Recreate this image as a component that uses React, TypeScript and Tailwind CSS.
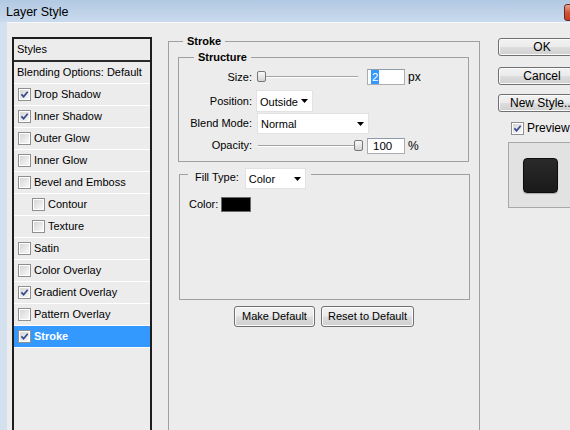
import React from "react";

function Check({ checked }: { checked?: boolean }) {
  return (
    <span className="w-[13px] h-[13px] shrink-0 border border-[#8e8f8f] bg-white p-[1px] flex">
      <span className="flex-1 bg-linear-to-br from-[#d6d6d6] to-[#f8f8f8] flex items-center justify-center">
        {checked && (
          <svg width="9" height="9" viewBox="0 0 9 9">
            <path d="M1.4 4.4 L3.6 6.7 L7.7 1.8" fill="none" stroke="#33498a" strokeWidth="1.7" />
          </svg>
        )}
      </span>
    </span>
  );
}

function Arrow() {
  return (
    <svg width="7" height="4" viewBox="0 0 7 4" className="shrink-0">
      <path d="M0 0 H7 L3.5 4 Z" fill="#000" />
    </svg>
  );
}

function Dropdown({ label, w, h }: { label: string; w: string; h: string }) {
  return (
    <div className={`${w} ${h} bg-white border border-[#e2e2e2] flex items-center justify-between pl-[3px] pr-[4px]`}>
      <span className="text-[11px] leading-[14px] mt-[1px]">{label}</span>
      <Arrow />
    </div>
  );
}

function Slider({ thumb }: { thumb: "start" | "end" }) {
  return (
    <div className="relative w-[106px] h-[12px]">
      <div className="absolute left-[1px] right-[5px] top-[5px] h-[2px] border-t border-[#a3a3a3] border-b border-b-white" />
      <div
        className={`absolute top-[0px] w-[9px] h-[11px] rounded-[2px] border border-[#777] bg-linear-to-b from-[#fafafa] to-[#d4d4d4] ${
          thumb === "start" ? "left-0" : "left-[97px]"
        }`}
      />
    </div>
  );
}

function NumInput({ children }: { children: React.ReactNode }) {
  return (
    <div className="w-[38px] h-[16px] bg-white border border-[#abadb3] border-t-[#8e9aa8] flex items-center pl-[3px] text-[11.5px] leading-[14px]">
      {children}
    </div>
  );
}

const winBtn =
  "h-[21px] rounded-[3px] border border-[#707070] bg-[linear-gradient(#f2f2f2_0%,#ebebeb_48%,#dddddd_52%,#cfcfcf_100%)] shadow-[inset_0_0_0_1px_#fbfbfb] text-[11px] flex items-center justify-center";

const rightBtn =
  "w-[88px] h-[18px] rounded-[3px] border border-[#707070] bg-[linear-gradient(#f2f2f2_0%,#ebebeb_48%,#dddddd_52%,#cfcfcf_100%)] shadow-[inset_0_0_0_1px_#fbfbfb] text-[12px] flex items-center justify-center";

type Row = { label: string; checked?: boolean; indent?: boolean; selected?: boolean };

const rows: Row[] = [
  { label: "Drop Shadow", checked: true },
  { label: "Inner Shadow", checked: true },
  { label: "Outer Glow" },
  { label: "Inner Glow" },
  { label: "Bevel and Emboss" },
  { label: "Contour", indent: true },
  { label: "Texture", indent: true },
  { label: "Satin" },
  { label: "Color Overlay" },
  { label: "Gradient Overlay", checked: true },
  { label: "Pattern Overlay" },
  { label: "Stroke", checked: true, selected: true },
];

export default function App() {
  return (
    <div className="w-[570px] h-[430px] overflow-hidden bg-[#d3e0ee] flex flex-col font-['Liberation_Sans',Arial,sans-serif] text-[11px] text-black">
      {/* Title bar */}
      <div className="h-[22px] shrink-0 bg-linear-to-b from-[#b2c9e3] to-[#c9daed] flex items-center justify-between pl-[6px]">
        <span className="text-[12.5px] leading-[14px] mt-[2px]">Layer Style</span>
        <div className="w-[40px] h-[17px] mt-[2px] mr-[-34px] rounded-[3px] border border-[#6b2a20] bg-linear-to-b from-[#e8a493] via-[#d0543a] to-[#c43c22]" />
      </div>

      {/* Body */}
      <div className="flex-1 ml-[7px] bg-[#ececec] border-t border-[#f4f7fb] flex pl-[5px]">
        {/* Styles list */}
        <div className="w-[140px] h-[420px] mt-[14px] shrink-0 border-2 border-[#1e1e1e] flex flex-col">
          <div className="h-[21px] flex items-center pl-[3px] text-[11px]">Styles</div>
          <div className="h-[2px] bg-[#2a2a2a]" />
          <div className="h-[22px] flex items-center pl-[3px] border-b border-white">Blending Options: Default</div>
          {rows.map((r) => (
            <div
              key={r.label}
              className={`h-[22px] flex items-center border-b border-white ${r.indent ? "pl-[18px]" : "pl-[4px]"} ${
                r.selected ? "bg-[#3399ff] text-white font-bold" : ""
              }`}
            >
              <Check checked={r.checked} />
              <span className="ml-[3px]">{r.label}</span>
            </div>
          ))}
        </div>

        {/* Middle */}
        <fieldset className="w-[312px] h-[420px] mt-[12px] ml-[16px] shrink-0 border border-[#a0a0a0] flex flex-col">
          <legend className="ml-[14px] px-[4px] font-bold leading-[13px]">Stroke</legend>

          <fieldset className="mt-[3px] ml-[9px] mr-[10px] border border-[#a0a0a0] pb-[5px]">
            <legend className="ml-[15px] px-[4px] font-bold leading-[13px]">Structure</legend>
            <div className="h-[26px] flex items-center">
              <span className="w-[73px] text-right">Size:</span>
              <div className="ml-[5px]">
                <Slider thumb="start" />
              </div>
              <div className="ml-[4px]">
                <NumInput>
                  <span className="bg-[#3399ff] text-white px-[1px]">2</span>
                </NumInput>
              </div>
              <span className="ml-[3px] text-[12px]">px</span>
            </div>
            <div className="h-[22px] flex items-center">
              <span className="w-[73px] text-right">Position:</span>
              <div className="ml-[4px]">
                <Dropdown label="Outside" w="w-[57px]" h="h-[22px]" />
              </div>
            </div>
            <div className="h-[23px] flex items-center">
              <span className="w-[73px] text-right">Blend Mode:</span>
              <div className="ml-[5px]">
                <Dropdown label="Normal" w="w-[112px]" h="h-[21px]" />
              </div>
            </div>
            <div className="h-[21px] flex items-center">
              <span className="w-[73px] text-right">Opacity:</span>
              <div className="ml-[5px]">
                <Slider thumb="end" />
              </div>
              <div className="ml-[4px]">
                <NumInput>
                  <span className="pl-[2px]">100</span>
                </NumInput>
              </div>
              <span className="ml-[3px] text-[12px]">%</span>
            </div>
          </fieldset>

          <fieldset className="mt-[4px] ml-[10px] mr-[9px] h-[134px] border border-[#a0a0a0]">
            <legend className="ml-[8px] pl-[7px] pr-[5px] h-[16px] flex items-start">
              <span className="mt-[5px] leading-[13px]">Fill Type:</span>
              <div className="ml-[6px] mt-[2px]">
                <Dropdown label="Color" w="w-[61px]" h="h-[21px]" />
              </div>
            </legend>
            <div className="mt-[14px] pl-[9px] flex items-center">
              <span>Color:</span>
              <div className="ml-[3px] w-[30px] h-[15px] bg-black border border-[#6a6a6a]" />
            </div>
          </fieldset>

          <div className="mt-[6px] flex justify-center gap-[6px]">
            <div className={`${winBtn} w-[81px]`}>Make Default</div>
            <div className={`${winBtn} w-[93px]`}>Reset to Default</div>
          </div>
        </fieldset>

        {/* Right */}
        <div className="ml-[18px] mt-[15px] flex flex-col shrink-0">
          <div className={`${rightBtn} border-[#3c7fb1] bg-[linear-gradient(#eaf6fd_0%,#d9f0fc_48%,#bee6fd_52%,#a7d9f5_100%)]`}>OK</div>
          <div className={`${rightBtn} mt-[11px]`}>Cancel</div>
          <div className={`${rightBtn} mt-[9px]`}>New Style...</div>
          <div className="mt-[8px] ml-[13px] h-[16px] flex items-center">
            <Check checked />
            <span className="ml-[3px] text-[12px]">Preview</span>
          </div>
          <div className="mt-[6px] ml-[10px] w-[70px] h-[66px] bg-[#e2e2e2] border border-[#a8a8a8] pl-[14px] pt-[15px]">
            <div className="w-[35px] h-[35px] rounded-[4px] border border-[#0c0c0c] bg-linear-to-b from-[#2a2a2a] to-[#1a1a1a] shadow-[0_1px_1px_rgba(0,0,0,0.25)]" />
          </div>
        </div>
      </div>
    </div>
  );
}
